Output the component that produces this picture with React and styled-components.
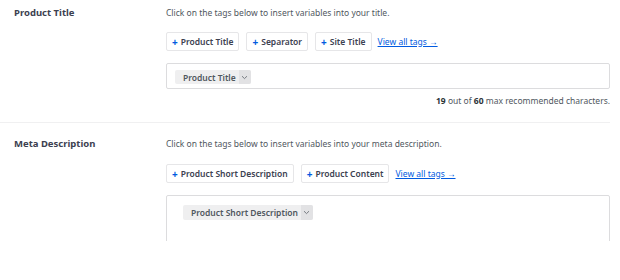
import React from 'react';
import styled, { createGlobalStyle } from 'styled-components';

const GlobalStyle = createGlobalStyle`
  * { box-sizing: border-box; }
  body {
    margin: 0;
    background: #ffffff;
    font-family: "Noto Sans", "Open Sans", sans-serif;
  }
`;

const Page = styled.div`
  width: 610px;
  height: 241px;
  overflow: hidden;
`;

const Section = styled.div`
  display: grid;
  grid-template-columns: 152px 444px;
  padding: ${(p) => (p.first ? '6px' : '14px')} 0 14px 14px;
  border-bottom: ${(p) => (p.divider ? '1px solid #f0f0f1' : 'none')};
`;

const Label = styled.div`
  font-size: 9.5px;
  line-height: 14px;
  font-weight: 700;
  color: #3c4150;
`;

const Content = styled.div`
  display: flex;
  flex-direction: column;
`;

const Help = styled.p`
  margin: 0;
  font-size: 8.5px;
  line-height: 14px;
  color: #50575e;
`;

const Tags = styled.div`
  display: flex;
  align-items: center;
  gap: 7px;
  margin-top: ${(p) => p.top}px;
`;

const TagButton = styled.button`
  height: 19px;
  padding: 0 5px;
  border: 1px solid #e6e6e8;
  border-radius: 2px;
  background: #ffffff;
  font-family: inherit;
  font-size: 8.5px;
  font-weight: 600;
  color: #3c4150;
  display: flex;
  align-items: center;
  gap: 3px;
  cursor: pointer;
`;

const Plus = styled.span`
  color: #005ae0;
  font-weight: 700;
  font-size: 10px;
  line-height: 1;
`;

const ViewAll = styled.a`
  font-size: 8.5px;
  color: #005ae0;
  text-decoration: underline;
  margin-left: -1px;
  cursor: pointer;
`;

const Field = styled.div`
  margin-top: 12px;
  height: ${(p) => p.h}px;
  border: 1px solid #dcdcde;
  border-radius: 2px;
  padding: ${(p) => p.pad};
  display: flex;
  align-items: flex-start;
`;

const Chip = styled.span`
  display: inline-flex;
  align-items: stretch;
  height: ${(p) => p.h}px;
  background: #efeff0;
  border-radius: 2px;
  overflow: hidden;
`;

const ChipText = styled.span`
  display: flex;
  align-items: center;
  padding: 0 3px 0 8px;
  font-size: 8.5px;
  font-weight: 600;
  color: #50575e;
`;

const ChipToggle = styled.span`
  display: flex;
  align-items: center;
  justify-content: center;
  width: 12px;
  background: #e2e2e4;
`;

const Counter = styled.div`
  margin-top: 5px;
  text-align: right;
  font-size: 8.5px;
  line-height: 14px;
  color: #50575e;

  b {
    color: #2c3338;
    font-weight: 700;
  }
`;

const Chevron = () => (
  <svg width="7" height="5" viewBox="0 0 7 5">
    <path d="M1 1.2 L3.5 3.6 L6 1.2" fill="none" stroke="#6b6f76" strokeWidth="0.9" />
  </svg>
);

const Tag = ({ children }) => (
  <TagButton>
    <Plus>+</Plus>
    {children}
  </TagButton>
);

const App = () => (
  <Page>
    <GlobalStyle />
    <Section first divider>
      <Label>Product Title</Label>
      <Content>
        <Help>Click on the tags below to insert variables into your title.</Help>
        <Tags top={12}>
          <Tag>Product Title</Tag>
          <Tag>Separator</Tag>
          <Tag>Site Title</Tag>
          <ViewAll>View all tags →</ViewAll>
        </Tags>
        <Field h={26} pad="6px 8px">
          <Chip h={14}>
            <ChipText>Product Title</ChipText>
            <ChipToggle><Chevron /></ChipToggle>
          </Chip>
        </Field>
        <Counter>
          <b>19</b> out of <b>60</b> max recommended characters.
        </Counter>
      </Content>
    </Section>
    <Section>
      <Label>Meta Description</Label>
      <Content>
        <Help>Click on the tags below to insert variables into your meta description.</Help>
        <Tags top={13}>
          <Tag>Product Short Description</Tag>
          <Tag>Product Content</Tag>
          <ViewAll>View all tags →</ViewAll>
        </Tags>
        <Field h={80} pad="9px 16px">
          <Chip h={15}>
            <ChipText>Product Short Description</ChipText>
            <ChipToggle><Chevron /></ChipToggle>
          </Chip>
        </Field>
      </Content>
    </Section>
  </Page>
);

export default App;
